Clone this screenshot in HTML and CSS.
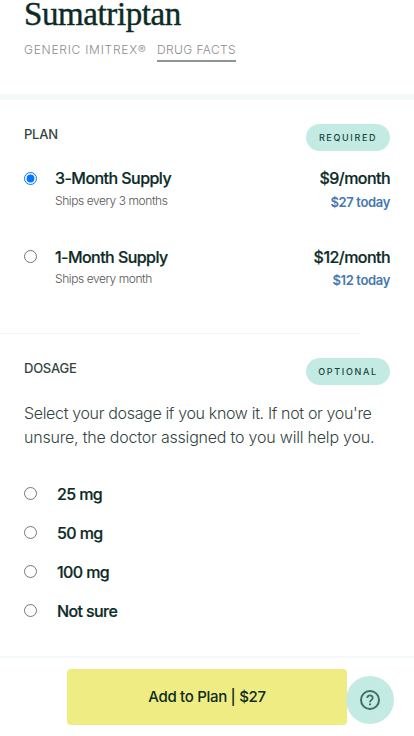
FILE: index.html
```html
<!DOCTYPE html>
<html lang="en">
<head>
    <meta charset="UTF-8">
    <meta name="viewport" content="width=device-width, initial-scale=1.0">
    <title>Sumatriptan</title>
    <link rel="stylesheet" href="styles.css">
</head>
<body>
    <div class="page">
        <header class="product">
            <h1>Sumatriptan</h1>
            <div class="product-meta">
                <span class="generic">Generic Imitrex®</span>
                <a class="facts" href="#">Drug Facts</a>
            </div>
        </header>

        <section class="plan">
            <div class="section-head">
                <h2>Plan</h2>
                <span class="pill">Required</span>
            </div>
            <label class="plan-option">
                <input type="radio" name="plan" checked>
                <span class="details">
                    <span class="name">3-Month Supply</span>
                    <span class="note">Ships every 3 months</span>
                </span>
                <span class="cost">
                    <span class="name">$9/month</span>
                    <span class="today">$27 today</span>
                </span>
            </label>
            <label class="plan-option">
                <input type="radio" name="plan">
                <span class="details">
                    <span class="name">1-Month Supply</span>
                    <span class="note">Ships every month</span>
                </span>
                <span class="cost">
                    <span class="name">$12/month</span>
                    <span class="today">$12 today</span>
                </span>
            </label>
        </section>

        <hr class="divider">

        <section class="dosage">
            <div class="section-head">
                <h2>Dosage</h2>
                <span class="pill">Optional</span>
            </div>
            <p class="help-text">Select your dosage if you know it. If not or you're<br><span class="help-more">unsure, the doctor assigned to you will help you.</span></p>
            <div class="dosage-list">
                <label class="dose"><input type="radio" name="dose"><span>25 mg</span></label>
                <label class="dose"><input type="radio" name="dose"><span>50 mg</span></label>
                <label class="dose"><input type="radio" name="dose"><span>100 mg</span></label>
                <label class="dose"><input type="radio" name="dose"><span>Not sure</span></label>
            </div>
        </section>

        <footer>
            <button class="add-button" type="button">Add to Plan | $27</button>
        </footer>
        <button class="help-button" type="button" aria-label="Help">
            <svg width="24" height="24" viewBox="0 0 24 24" fill="none" stroke="#3d6f66" stroke-width="2">
                <circle cx="12" cy="12" r="9"/>
                <path d="M9.3 10a2.7 2.7 0 0 1 5.4 0c0 1.8-2.7 2-2.7 4.2" stroke-width="1.8"/>
                <path d="M12 15.4v1.9"/>
            </svg>
        </button>
    </div>
</body>
</html>
```

FILE: styles.css
```css
* {
    margin: 0;
    padding: 0;
    box-sizing: border-box;
}

body {
    font-family: Inter, "Liberation Sans", sans-serif;
    background-color: #fff;
    color: #0b2b26;
}

.page {
    display: flex;
    flex-direction: column;
    position: relative;
    width: 414px;
    height: 736px;
    overflow: hidden;
    white-space: nowrap;
}

/* Title */
.product {
    height: 100px;
    padding: 0 24px;
    border-bottom: 6px solid #f3f8f8;
}

h1 {
    font-family: "Liberation Serif", serif;
    font-size: 33px;
    font-weight: 400;
    line-height: 28px;
    letter-spacing: -0.4px;
    -webkit-text-stroke: 0.4px #0b2b26;
}

.product-meta {
    display: flex;
    gap: 10.5px;
    margin-top: 14px;
    font-size: 12px;
    font-weight: 300;
    line-height: 16px;
    letter-spacing: 0.75px;
    text-transform: uppercase;
    color: #8d8d8d;
}

.facts {
    padding-bottom: 2px;
    border-bottom: 2px solid #8d9492;
    color: inherit;
    letter-spacing: 0.4px;
    text-decoration: none;
}

/* Plan */
.plan {
    height: 233px;
    padding: 24px 24px 0;
}

.section-head {
    display: flex;
    justify-content: space-between;
    height: 27px;
}

h2 {
    font-size: 13px;
    font-weight: 500;
    line-height: 20px;
    letter-spacing: -0.25px;
    text-transform: uppercase;
    color: #33443f;
}

.pill {
    width: 84px;
    height: 27px;
    border-radius: 14px;
    background-color: #c4ebe3;
    font-size: 9px;
    font-weight: 500;
    line-height: 27px;
    letter-spacing: 1.65px;
    text-align: center;
    text-transform: uppercase;
    color: #17443d;
}

.plan-option {
    display: flex;
    height: 60px;
    margin-top: 16px;
}

.plan-option + .plan-option {
    margin-top: 18px;
}

.plan-option + .plan-option .name {
    padding-top: 1px;
    margin-bottom: -1px;
}

input[type="radio"] {
    width: 13px;
    height: 13px;
    flex: none;
}

.plan-option input {
    margin-top: 5px;
}

.details {
    display: flex;
    flex-direction: column;
    margin-left: 18px;
}

.name {
    font-size: 16px;
    font-weight: 500;
    line-height: 22px;
    letter-spacing: -0.55px;
    -webkit-text-stroke: 0.2px #0b2b26;
}

.note {
    margin-top: 3px;
    font-size: 12px;
    font-weight: 300;
    line-height: 18px;
    letter-spacing: -0.43px;
    color: #555;
}

.cost {
    display: flex;
    flex-direction: column;
    align-items: flex-end;
    margin-left: auto;
}

.today {
    margin-top: 4px;
    font-size: 13px;
    font-weight: 600;
    line-height: 18px;
    letter-spacing: -0.35px;
    color: #4677b0;
}

.divider {
    width: 361px;
    height: 1px;
    border: 0;
    background-color: #f2f5f4;
}

/* Dosage */
.dosage {
    height: 322px;
    padding: 24px 24px 0;
}

.help-text {
    margin-top: 16px;
    font-size: 16px;
    font-weight: 300;
    line-height: 24px;
    letter-spacing: -0.34px;
    color: #33443f;
}

.help-more {
    letter-spacing: -0.2px;
}

.dosage-list {
    margin-top: 25px;
}

.dose {
    display: flex;
    align-items: center;
    gap: 20px;
    height: 39px;
    font-size: 16px;
    font-weight: 500;
    letter-spacing: -0.6px;
    -webkit-text-stroke: 0.2px #0b2b26;
}

/* Bottom bar */
footer {
    display: flex;
    justify-content: center;
    height: 80px;
    padding-top: 11px;
    border-top: 2px solid #f3f8f8;
}

button {
    border: 0;
    font-family: inherit;
    cursor: pointer;
}

.add-button {
    width: 280px;
    height: 56px;
    padding-bottom: 2px;
    border-radius: 4px;
    background-color: #f0ec84;
    font-size: 15px;
    font-weight: 500;
    letter-spacing: -0.3px;
    color: #0b2b1c;
}

/* Floats over the bottom bar */
.help-button {
    display: flex;
    align-items: center;
    justify-content: center;
    position: absolute;
    right: 20px;
    bottom: 12px;
    width: 48px;
    height: 48px;
    border-radius: 50%;
    background-color: #c4ebe3;
}
```
